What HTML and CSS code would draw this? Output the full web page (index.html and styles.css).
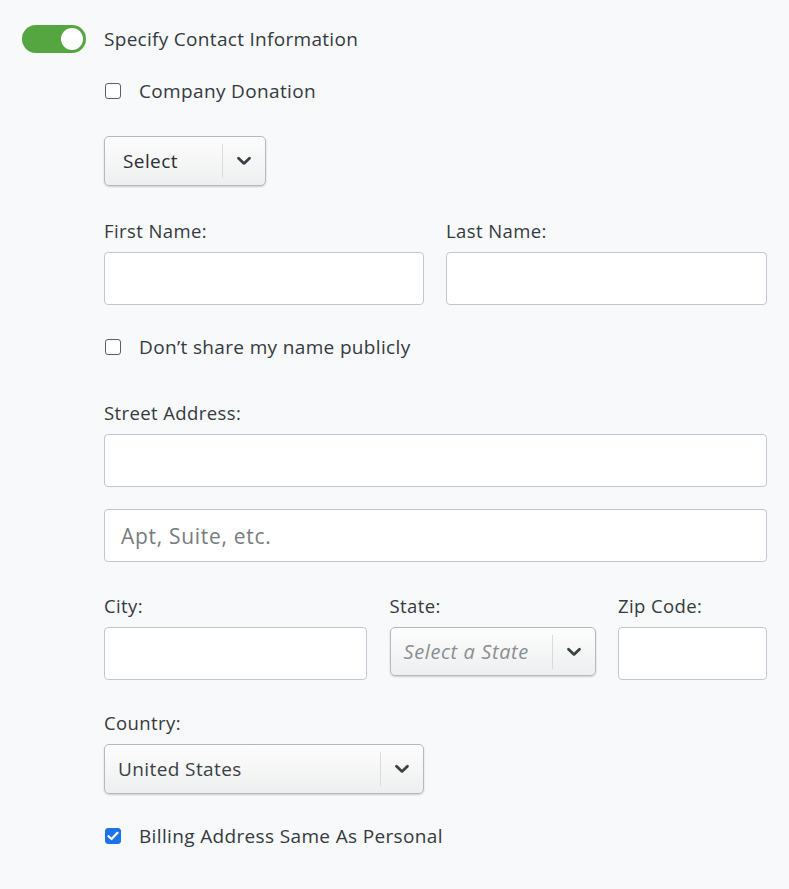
FILE: index.html
```html
<!DOCTYPE html>
<html>
<head>
<meta charset="utf-8">
<link rel="stylesheet" href="styles.css">
</head>
<body>
<div class="page">
  <div class="toggle-row">
    <span class="toggle"><span class="knob"></span></span>
    <span class="toggle-label">Specify Contact Information</span>
  </div>
  <div class="content">
    <div class="check-row r-company"><span class="box"></span><span class="check-text">Company Donation</span></div>

    <div class="select sel-type">
      <span class="sel-text">Select</span>
      <span class="sel-arrow"><svg width="16" height="10" viewBox="0 0 16 10"><path d="M2.5 2.2 L8 7.4 L13.5 2.2" fill="none" stroke="#3a4149" stroke-width="2.8" stroke-linecap="round" stroke-linejoin="round"/></svg></span>
    </div>

    <div class="grid2 r-name">
      <div class="field">
        <div class="label">First Name:</div>
        <div class="input"></div>
      </div>
      <div class="field">
        <div class="label">Last Name:</div>
        <div class="input"></div>
      </div>
    </div>

    <div class="check-row r-share"><span class="box"></span><span class="check-text">Don’t share my name publicly</span></div>

    <div class="field r-street">
      <div class="label">Street Address:</div>
      <div class="input"></div>
      <div class="input input-apt"><span class="placeholder">Apt, Suite, etc.</span></div>
    </div>

    <div class="grid3 r-city">
      <div class="field">
        <div class="label">City:</div>
        <div class="input"></div>
      </div>
      <div class="field">
        <div class="label">State:</div>
        <div class="select sel-state">
          <span class="sel-text sel-placeholder">Select a State</span>
          <span class="sel-arrow"><svg width="16" height="10" viewBox="0 0 16 10"><path d="M2.5 2.2 L8 7.4 L13.5 2.2" fill="none" stroke="#3a4149" stroke-width="2.8" stroke-linecap="round" stroke-linejoin="round"/></svg></span>
        </div>
      </div>
      <div class="field">
        <div class="label">Zip Code:</div>
        <div class="input"></div>
      </div>
    </div>

    <div class="field r-country">
      <div class="label">Country:</div>
      <div class="select sel-country">
        <span class="sel-text">United States</span>
        <span class="sel-arrow"><svg width="16" height="10" viewBox="0 0 16 10"><path d="M2.5 2.2 L8 7.4 L13.5 2.2" fill="none" stroke="#3a4149" stroke-width="2.8" stroke-linecap="round" stroke-linejoin="round"/></svg></span>
      </div>
    </div>

    <div class="check-row r-billing"><span class="box box-checked"><svg width="12" height="10" viewBox="0 0 12 10"><path d="M1.5 5.2 L4.5 8 L10.5 1.8" fill="none" stroke="#fff" stroke-width="2.2" stroke-linecap="round" stroke-linejoin="round"/></svg></span><span class="check-text">Billing Address Same As Personal</span></div>
  </div>
</div>
</body>
</html>
```
FILE: styles.css
```css
html, body {
  margin: 0;
  padding: 0;
  background: #f8f9fa;
}
body {
  font-family: "Open Sans", "Liberation Sans", sans-serif;
  color: #343a40;
  font-size: 17px;
}
.page {
  padding: 25px 22px 40px 22px;
}
.toggle-row {
  display: flex;
  align-items: center;
  gap: 18px;
  height: 28px;
}
.toggle {
  width: 64px;
  height: 28px;
  border-radius: 14px;
  background: #55a540;
  display: flex;
  align-items: center;
  justify-content: flex-end;
  padding-right: 3px;
  box-sizing: border-box;
}
.knob {
  width: 22px;
  height: 22px;
  border-radius: 50%;
  background: #fff;
}
.toggle-label {
  font-size: 19px;
  letter-spacing: 0.3px;
  line-height: 22px;
}
.content {
  padding-left: 82px;
  display: flex;
  flex-direction: column;
}
.check-row {
  display: flex;
  align-items: center;
  height: 22px;
}
.box {
  width: 16px;
  height: 16px;
  box-sizing: border-box;
  border: 1.5px solid #5b5f63;
  border-radius: 3px;
  background: #fff;
  margin-left: 1px;
  margin-right: 18px;
  display: flex;
  align-items: center;
  justify-content: center;
}
.box-checked {
  background: #1a73e8;
  border-color: #1a73e8;
}
.check-text {
  font-size: 19px;
  letter-spacing: 0.35px;
  line-height: 22px;
}
.r-company { margin-top: 27px; }
.sel-type { margin-top: 34px; width: 162px; }
.r-name { margin-top: 34px; }
.r-share { margin-top: 31px; }
.r-street { margin-top: 44px; }
.r-city { margin-top: 33px; }
.r-country { margin-top: 32px; }
.r-billing { margin-top: 31px; }

.grid2 {
  display: grid;
  grid-template-columns: 320px 321px;
  column-gap: 22px;
}
.grid3 {
  display: grid;
  grid-template-columns: 263px 206px 149px;
  column-gap: 22px;
  justify-content: space-between;
}
.field {
  display: flex;
  flex-direction: column;
}
.label {
  font-size: 18.5px;
  letter-spacing: 0.4px;
  line-height: 22px;
  margin-bottom: 10px;
}
.input {
  height: 53px;
  box-sizing: border-box;
  background: #fff;
  border: 1px solid #c3c7cb;
  border-radius: 4px;
  display: flex;
  align-items: center;
}
.input-apt {
  margin-top: 22px;
  padding-left: 16px;
}
.placeholder {
  color: #777b80;
  font-size: 21px;
  letter-spacing: 0.7px;
}
.select {
  height: 50px;
  box-sizing: border-box;
  border: 1px solid #b5b9bd;
  border-radius: 5px;
  background: linear-gradient(#fdfdfd, #eeeff0);
  box-shadow: 0 1px 2px rgba(0, 0, 0, 0.18);
  display: flex;
  align-items: center;
}
.sel-text {
  flex: 1;
  font-size: 19px;
  letter-spacing: 0.4px;
  color: #2b2f33;
}
.sel-type .sel-text { padding-left: 18px; }
.sel-state { height: 49px; }
.sel-state .sel-text { padding-left: 13px; }
.sel-country { width: 320px; }
.sel-country .sel-text { padding-left: 13px; color: #3a3f44; }
.sel-placeholder {
  font-style: italic;
  font-size: 20px;
  letter-spacing: 0.6px;
  color: #8a8e92 !important;
}
.sel-arrow {
  width: 42px;
  height: 34px;
  border-left: 1px solid #d8dadc;
  display: flex;
  align-items: center;
  justify-content: center;
}
```
